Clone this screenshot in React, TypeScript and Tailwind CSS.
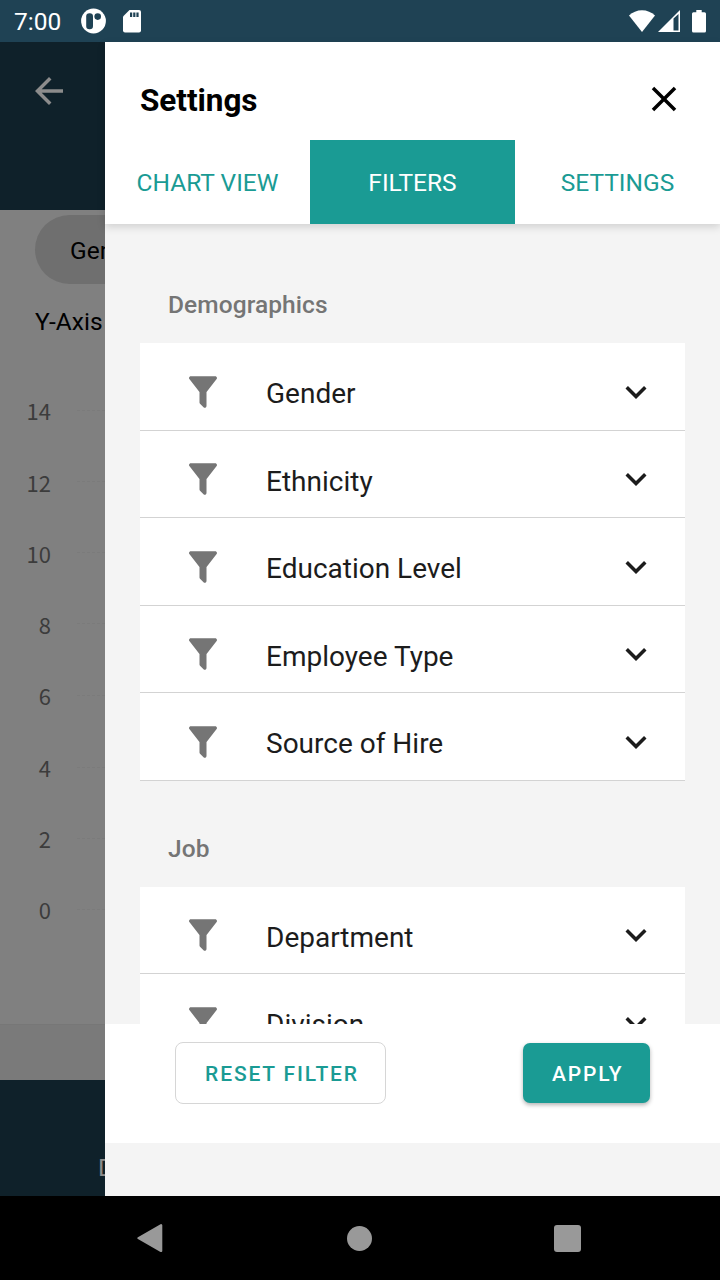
import React from 'react';

interface FilterSection {
  title: string;
  items: string[];
}

interface AxisTick {
  label: string;
  height: string;
}

const sections: FilterSection[] = [
  { title: 'Demographics', items: ['Gender', 'Ethnicity', 'Education Level', 'Employee Type', 'Source of Hire'] },
  { title: 'Job', items: ['Department', 'Division'] },
];

const tabs = ['CHART VIEW', 'FILTERS', 'SETTINGS'];

const ticks: AxisTick[] = [
  { label: '14', height: 'h-[72px]' },
  { label: '12', height: 'h-[71px]' },
  { label: '10', height: 'h-[71px]' },
  { label: '8', height: 'h-[71px]' },
  { label: '6', height: 'h-[72px]' },
  { label: '4', height: 'h-[72px]' },
  { label: '2', height: 'h-[70px]' },
  { label: '0', height: 'h-[72px]' },
];

const FilterIcon: React.FC = () => (
  <svg viewBox="0 0 24 24" className="size-[42px] shrink-0 fill-[#757575]">
    <path d="M14,12V19.88C14.04,20.18 13.94,20.5 13.71,20.71C13.32,21.1 12.69,21.1 12.3,20.71L10.29,18.7C10.06,18.47 9.96,18.16 10,17.87V12H9.97L4.21,4.62C3.87,4.19 3.95,3.56 4.38,3.22C4.57,3.08 4.78,3 5,3V3H19V3C19.22,3 19.43,3.08 19.62,3.22C20.05,3.56 20.13,4.19 19.79,4.62L14.03,12H14Z" />
  </svg>
);

const ChevronIcon: React.FC = () => (
  <svg viewBox="0 0 24 24" className="size-[42px] shrink-0 fill-[#1c1c1c]">
    <path d="M7.41,8.58L12,13.17L16.59,8.58L18,10L12,16L6,10L7.41,8.58Z" />
  </svg>
);

const StatusBar: React.FC = () => (
  <header className="flex h-[42px] shrink-0 items-center bg-[#1f4254] pl-3.5 pr-[14px] text-white">
    <span className="w-[67px] pt-0.5 text-[24.5px] leading-none">7:00</span>
    <svg viewBox="0 0 26 26" className="size-[26px]">
      <circle cx="12.5" cy="13" r="12.4" fill="#fff" />
      <rect x="5.2" y="5.2" width="6.8" height="16" rx="3.2" fill="#1f4254" />
      <circle cx="16.7" cy="8.6" r="3.3" fill="#1f4254" />
    </svg>
    <svg viewBox="0 0 18 23" className="ml-4 h-[23px] w-[18px]">
      <path d="M6.5 0H16a2 2 0 0 1 2 2v18.5a2 2 0 0 1-2 2H2a2 2 0 0 1-2-2V6.5Z" fill="#fff" />
      <path d="M7 2.5h2.2V7H7zM10.2 2.5h2.2V7h-2.2zM13.4 2.5h2.2V7h-2.2z" fill="#1f4254" />
    </svg>
    <div className="ml-auto flex items-center">
      <svg viewBox="0 0 26 22" className="h-[22px] w-[26px]">
        <path d="M13 22 0 5.6C3.500 2.300 8 .3 13 .3s9.500 2 13 5.300Z" fill="#fff" />
      </svg>
      <svg viewBox="0 0 22 22" className="ml-[3px] h-[22px] w-[22px]">
        <path fillRule="evenodd" d="M22 0v22H0ZM15.500 8.500V20.500H20.500V4Z" fill="#fff" />
      </svg>
      <svg viewBox="0 0 14 23" className="ml-3 h-[23px] w-[14px]">
        <path d="M4.300 0h5.400v2.300H12.500A1.500 1.500 0 0 1 14 3.800V21a1.500 1.500 0 0 1-1.500 1.500h-11A1.500 1.500 0 0 1 0 21V3.800a1.500 1.500 0 0 1 1.500-1.500h2.800Z" fill="#fff" />
      </svg>
    </div>
  </header>
);

const DimmedPage: React.FC = () => (
  <aside className="flex w-[105px] shrink-0 flex-col overflow-hidden whitespace-nowrap bg-[#808080]">
    <div className="h-[168px] shrink-0 bg-[#0f212a] pl-7 pt-7">
      <svg viewBox="0 0 24 24" className="size-[42px] fill-[#8c8c8c]">
        <path d="M20 11H7.830l5.590-5.590L12 4l-8 8 8 8 1.410-1.410L7.830 13H20v-2z" />
      </svg>
    </div>
    <div className="ml-[35px] mt-[5px] flex h-[69px] w-[200px] shrink-0 items-center rounded-full bg-[#6f6f6f] pl-[35px] pt-[3px] text-[24.5px] text-black">
      Gender
    </div>
    <div className="mt-5 h-[35px] shrink-0 pl-[35px] text-[24.5px] leading-[35px] text-black">Y-Axis</div>
    <div className="mt-[35px] flex flex-1 flex-col font-['Noto_Sans_CJK_JP',sans-serif] text-[22px] leading-none text-[#3c3c3c]">
      {ticks.map((tick) => (
        <div key={tick.label} className={`${tick.height} flex shrink-0 items-center`}>
          <span className="w-[51px] text-right">{tick.label}</span>
          <span className="ml-[26px] flex-1 border-t border-dashed border-[#7b7b7b]"></span>
        </div>
      ))}
    </div>
    <div className="h-14 shrink-0 border-t border-[#777] bg-[#7a7a7a]"></div>
    <div className="h-[116px] shrink-0 bg-[#0f212a] pl-[98px] pt-[73px] text-[24.5px] leading-[29px] text-[#8c8c8c]">Data</div>
  </aside>
);

const FilterGroup: React.FC<{ section: FilterSection }> = ({ section }) => (
  <section>
    <h2 className="pl-7 text-[24.5px] font-medium leading-[29px] tracking-[0.08px] text-[#757575]">{section.title}</h2>
    <ul className="mt-6 bg-white">
      {section.items.map((item) => (
        <li key={item} className="flex h-[87.5px] items-center border-b border-[#d3d3d3] pl-[42px] pr-7 pt-[11px]">
          <FilterIcon />
          <span className="ml-[42px] flex-1 pt-[5px] text-[28px] leading-8 text-[#1c1c1c]">{item}</span>
          <ChevronIcon />
        </li>
      ))}
    </ul>
  </section>
);

const SettingsDrawer: React.FC = () => {
  const [active, setActive] = React.useState('FILTERS');

  return (
    <main className="flex min-w-0 flex-1 flex-col bg-[#f4f4f4]">
      <div className="z-10 shrink-0 bg-white shadow-[0_3px_8px_rgba(0,0,0,0.15)]">
        <div className="flex h-[98px] items-center justify-between px-[35px] pt-4">
          <h1 className="pt-1 text-[31.5px] font-bold leading-none tracking-[-0.05px] text-black">Settings</h1>
          <button type="button" aria-label="Close">
            <svg viewBox="0 0 24 24" className="size-[42px] fill-black">
              <path d="M19,6.41L17.59,5L12,10.59L6.41,5L5,6.41L10.59,12L5,17.59L6.41,19L12,13.41L17.59,19L19,17.59L13.41,12L19,6.41Z" />
            </svg>
          </button>
        </div>
        <nav className="grid h-[84px] grid-cols-3">
          {tabs.map((tab) => (
            <button
              key={tab}
              type="button"
              onClick={() => setActive(tab)}
              className={`pt-0.5 text-[24.5px] ${tab === active ? 'bg-[#1a9b94] text-white' : 'text-[#1a9b94]'}`}
            >
              {tab}
            </button>
          ))}
        </nav>
      </div>

      <div className="flex min-h-0 flex-1 flex-col gap-[53px] overflow-hidden px-[35px] pt-[66px]">
        {sections.map((section) => (
          <FilterGroup key={section.title} section={section} />
        ))}
      </div>

      <footer className="flex h-[119px] shrink-0 items-start justify-between bg-white px-[70px] pt-[18px] text-[21px] font-medium tracking-[1.85px]">
        <button type="button" className="h-[62px] w-[211px] rounded-[8px] border border-[#d6d6d6] pl-[3px] pt-1 text-[#1a9b94]">
          RESET FILTER
        </button>
        <button type="button" className="mt-px h-[60px] w-[127.5px] rounded-[7px] bg-[#1a9b94] pl-[3px] pt-1 text-white shadow-[0_2px_4px_rgba(0,0,0,0.3)]">
          APPLY
        </button>
      </footer>
      <div className="h-[53px] shrink-0"></div>
    </main>
  );
};

const NavigationBar: React.FC = () => (
  <footer className="flex h-[84px] shrink-0 items-center justify-between bg-black pl-[137px] pr-[139px]">
    <svg viewBox="0 0 26 28" className="h-7 w-[26px] fill-[#999]">
      <path d="M23.500.2.900 13.200a1 1 0 0 0 0 1.700l22.600 13a1.200 1.200 0 0 0 1.800-1V1.200a1.200 1.200 0 0 0-1.800-1Z" />
    </svg>
    <span className="ml-0.5 size-[25px] rounded-full bg-[#999]"></span>
    <span className="size-[27px] rounded-[3px] bg-[#999]"></span>
  </footer>
);

const App: React.FC = () => (
  <div className="flex h-[1280px] w-[720px] flex-col overflow-hidden bg-black font-[Roboto,sans-serif]">
    <StatusBar />
    <div className="flex min-h-0 flex-1">
      <DimmedPage />
      <SettingsDrawer />
    </div>
    <NavigationBar />
  </div>
);

export default App;
